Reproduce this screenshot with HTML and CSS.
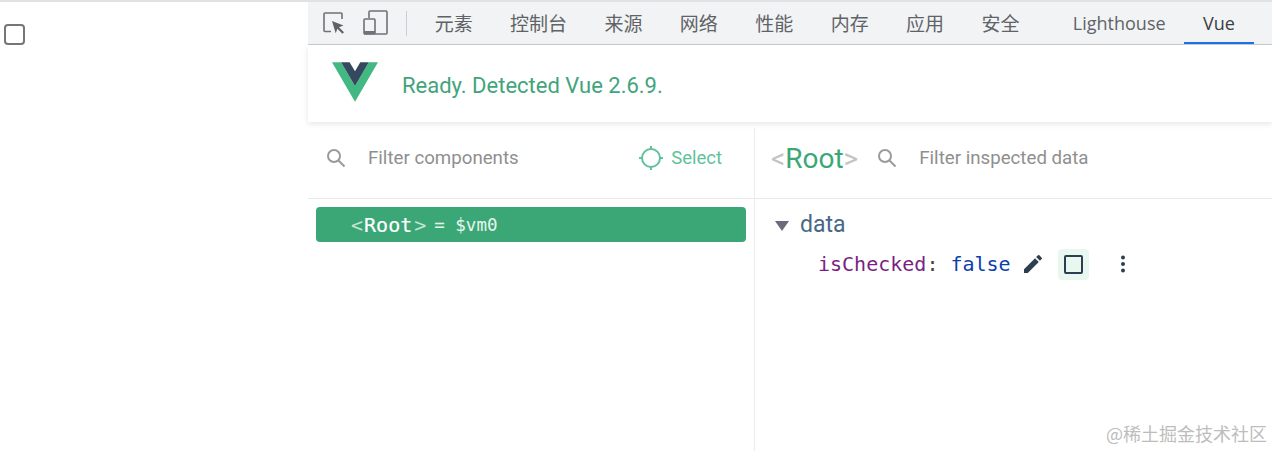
FILE: index.html
```html
<!DOCTYPE html>
<html lang="zh">
<head>
  <meta charset="UTF-8">
  <title>Vue Devtools</title>
  <link rel="stylesheet" href="styles.css">
</head>
<body>
  <div class="page">
    <div class="preview">
      <input type="checkbox" class="demo-check">
    </div>
    <div class="devtools">
      <div class="toolbar">
        <div class="tool-icons">
          <svg width="24" height="24" viewBox="0 0 24 24" fill="none">
            <path d="M9 20.500H3a1 1 0 0 1-1-1V3a1 1 0 0 1 1-1h16a1 1 0 0 1 1 1v5" stroke="#6f7276" stroke-width="1.600"/>
            <path d="M10 10l11.500 4.500-4.500 1.700 5 5-1.600 1.600-5-5-1.700 4.500z" fill="#5f6368"/>
          </svg>
          <svg width="26" height="26" viewBox="0 0 26 26" fill="none">
            <path d="M7 8V2a1 1 0 0 1 1-1h16a1 1 0 0 1 1 1v21a1 1 0 0 1-1 1H13" stroke="#6f7276" stroke-width="1.600"/>
            <rect x="2" y="9" width="11" height="15" rx="1" stroke="#6f7276" stroke-width="1.600"/>
            <rect x="2" y="21" width="11" height="3.500" fill="#6f7276"/>
          </svg>
        </div>
        <div class="tabs">
          <span class="tab">元素</span>
          <span class="tab">控制台</span>
          <span class="tab">来源</span>
          <span class="tab">网络</span>
          <span class="tab">性能</span>
          <span class="tab">内存</span>
          <span class="tab">应用</span>
          <span class="tab">安全</span>
          <span class="tab tab-latin tab-first">Lighthouse</span>
          <span class="tab tab-latin active">Vue</span>
        </div>
      </div>

      <div class="vue-header">
        <svg class="logo" width="46" height="40" viewBox="0 0 256 221">
          <path d="M204.800 0H256L128 220.800 0 0h50.560L128 133.120 204.800 0z" fill="#42b883"/>
          <path d="M50.560 0L128 133.120 204.800 0h-47.360L128 51.200 97.920 0H50.560z" fill="#35495e"/>
        </svg>
        <span class="ready">Ready. Detected Vue 2.6.9.</span>
      </div>

      <div class="panes">
        <div class="pane-left">
          <div class="search-row">
            <svg class="search-icon" width="24" height="24" viewBox="0 0 24 24" fill="none" stroke="#9a9a9a" stroke-width="2">
              <circle cx="10" cy="10" r="6"/>
              <path d="M14.500 14.500l6 6"/>
            </svg>
            <span class="placeholder">Filter components</span>
            <div class="select-btn">
              <svg width="26" height="26" viewBox="0 0 26 26" fill="none" stroke="#5fc29c" stroke-width="2">
                <circle cx="13" cy="13" r="9"/>
                <path d="M13 1v3M13 22v3M1 13h3M22 13h3"/>
              </svg>
              <span>Select</span>
            </div>
          </div>
          <div class="tree">
            <div class="tree-row">
              <span class="bracket">&lt;</span><span class="tag-name">Root</span><span class="bracket">&gt;</span>
              <span class="vm-ref">= $vm0</span>
            </div>
          </div>
        </div>

        <div class="pane-right">
          <div class="search-row inspected">
            <span class="root-title"><span class="title-bracket">&lt;</span>Root<span class="title-bracket">&gt;</span></span>
            <svg class="search-icon" width="24" height="24" viewBox="0 0 24 24" fill="none" stroke="#9a9a9a" stroke-width="2">
              <circle cx="10" cy="10" r="6"/>
              <path d="M14.500 14.500l6 6"/>
            </svg>
            <span class="placeholder">Filter inspected data</span>
          </div>
          <div class="state">
            <div class="section-title">
              <span class="arrow"></span>
              <span>data</span>
            </div>
            <div class="prop-row">
              <span class="prop-key">isChecked</span><span class="prop-colon">:</span>
              <span class="prop-value">false</span>
              <svg class="edit-icon" width="24" height="24" viewBox="0 0 24 24">
                <path d="M3 17.250V21h3.750L17.810 9.940l-3.750-3.750L3 17.250zM20.710 7.040a1 1 0 0 0 0-1.410l-2.340-2.340a1 1 0 0 0-1.410 0l-1.830 1.830 3.750 3.750 1.830-1.830z" fill="#2c3e50"/>
              </svg>
              <span class="toggle"><span class="toggle-box"></span></span>
              <svg class="more-icon" width="24" height="24" viewBox="0 0 24 24" fill="#2c3e50">
                <circle cx="12" cy="5.500" r="2"/>
                <circle cx="12" cy="12" r="2"/>
                <circle cx="12" cy="18.500" r="2"/>
              </svg>
            </div>
          </div>
        </div>
      </div>
    </div>
  </div>
  <div class="watermark">@稀土掘金技术社区</div>
</body>
</html>
```

FILE: styles.css
```css
* {
  box-sizing: border-box;
  margin: 0;
  padding: 0;
}
html, body {
  height: 451px;
  overflow: hidden;
}
body {
  font-family: Roboto, 'Noto Sans CJK SC', sans-serif;
  background: #fff;
  position: relative;
}
.page {
  display: flex;
  height: 451px;
  border-top: 2px solid #e1e2e4;
}
.preview {
  width: 308px;
  padding: 22px 0 0 4px;
}
.demo-check {
  appearance: none;
  display: block;
  width: 21px;
  height: 21px;
  border: 2px solid #767676;
  border-radius: 4px;
  background: #fff;
}
.devtools {
  flex: 1;
  display: flex;
  flex-direction: column;
  min-width: 0;
}

/* toolbar */
.toolbar {
  display: flex;
  align-items: stretch;
  height: 43px;
  background: #f1f3f4;
  border-bottom: 1px solid #cbcdd1;
}
.tool-icons {
  display: flex;
  align-items: center;
  gap: 16px;
  width: 99px;
  padding-left: 14px;
  position: relative;
}
.tool-icons::after {
  content: "";
  position: absolute;
  right: 0;
  top: 9px;
  width: 1px;
  height: 25px;
  background: #ccced1;
}
.tabs {
  display: flex;
  padding-left: 9px;
}
.tab {
  padding: 0 18.700px;
  font-family: 'Noto Sans CJK SC', sans-serif;
  font-size: 19px;
  line-height: 42px;
  color: #5f6368;
  white-space: nowrap;
}
.tab-latin {
  font-family: 'Open Sans', sans-serif;
  font-size: 18px;
}
.tab-first {
  margin-left: 16px;
}
.active {
  color: #3c4043;
  box-shadow: inset 0 -2px 0 #1a73e8;
}

/* header */
.vue-header {
  display: flex;
  align-items: center;
  height: 77px;
  padding-left: 24px;
  box-shadow: 0 2px 6px rgba(0, 0, 0, 0.1);
  position: relative;
}
.logo {
  margin-top: -3px;
}
.ready {
  margin-left: 24px;
  padding-top: 3px;
  font-size: 22px;
  color: #42a47b;
}

/* panes */
.panes {
  flex: 1;
  display: flex;
  margin-top: 6px;
}
.pane-left {
  width: 447px;
  border-right: 1px solid #ececec;
}
.pane-right {
  flex: 1;
}
.search-row {
  display: flex;
  align-items: center;
  height: 71px;
  padding: 0 32px 10px 16px;
  border-bottom: 1px solid #e9e9e9;
}
.placeholder {
  margin-left: 20px;
  font-size: 18.700px;
  color: #8f8f8f;
}
.select-btn {
  display: flex;
  align-items: center;
  gap: 7px;
  margin-left: auto;
  font-size: 18.500px;
  color: #5fc29c;
}
.tree {
  padding: 8px 8px 0;
}
.tree-row {
  display: flex;
  align-items: center;
  height: 35px;
  padding-left: 35px;
  background: #3ba776;
  border-radius: 4px;
  color: #fff;
  font-family: 'DejaVu Sans Mono', monospace;
}
.bracket {
  font-size: 20px;
  color: #c3e3d4;
}
.tag-name {
  margin: 0 2px 0 1px;
  font-size: 20px;
  -webkit-text-stroke: 0.2px #fff;
}
.vm-ref {
  margin-left: 8px;
  font-size: 17.500px;
  color: #e8f6ef;
}

/* inspector */
.inspected {
  padding-left: 16px;
}
.root-title {
  margin-right: 17px;
  font-size: 28px;
  color: #3ba776;
}
.title-bracket {
  color: #c4c4c4;
}
.state {
  padding: 11px 0 0 20px;
}
.section-title {
  display: flex;
  align-items: center;
  gap: 11px;
  height: 28px;
  font-size: 23px;
  color: #486887;
}
.arrow {
  width: 0;
  height: 0;
  border-left: 7px solid transparent;
  border-right: 7px solid transparent;
  border-top: 10px solid #6b6b7b;
  margin-top: 3px;
}
.prop-row {
  display: flex;
  align-items: center;
  height: 32px;
  margin-top: 10px;
  padding-left: 43px;
  font-family: 'DejaVu Sans Mono', monospace;
  font-size: 20px;
}
.prop-key {
  color: #7b1f83;
}
.prop-colon {
  color: #444;
}
.prop-value {
  margin-left: 12px;
  color: #0b3fb0;
}
.edit-icon {
  margin-left: 10px;
}
.toggle {
  display: flex;
  align-items: center;
  justify-content: center;
  width: 31px;
  height: 31px;
  margin-left: 13px;
  background: #e9f7f1;
  border-radius: 4px;
}
.toggle-box {
  width: 19px;
  height: 19px;
  border: 2.500px solid #2c3e50;
  border-radius: 2px;
}
.more-icon {
  margin-left: 22px;
}
.watermark {
  position: absolute;
  right: 5px;
  bottom: 6px;
  font-family: 'Noto Sans CJK SC', sans-serif;
  font-size: 18px;
  line-height: 24px;
  color: #bdbdbd;
}
```
